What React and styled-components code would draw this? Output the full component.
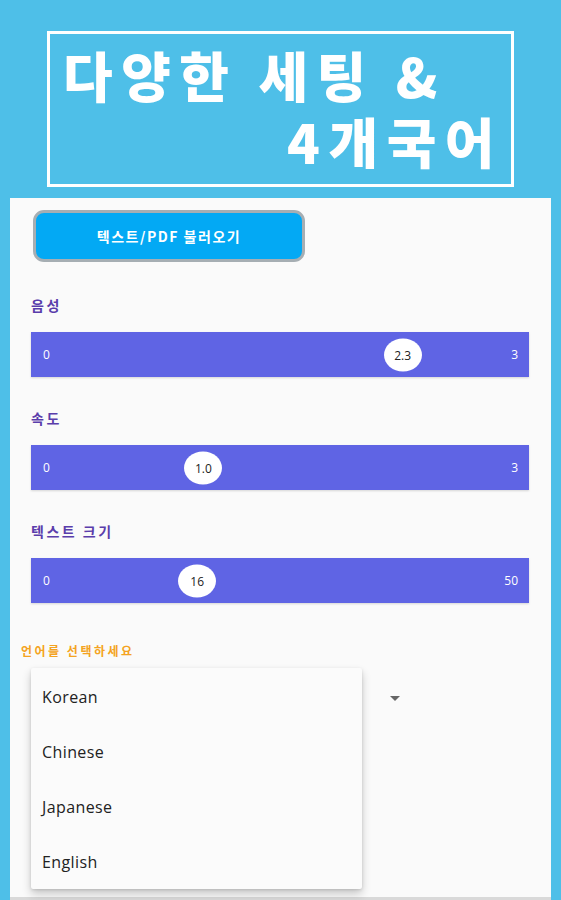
import styled, { createGlobalStyle } from 'styled-components'

const GlobalStyle = createGlobalStyle`
  html, body {
    margin: 0;
    padding: 0;
    background: #4ebfe8;
  }
  * { box-sizing: border-box; }
`

const sliders = [
  { label: '음성', min: 0, max: 3, value: 2.3, text: '2.3' },
  { label: '속도', min: 0, max: 3, value: 1.0, text: '1.0' },
  { label: '텍스트 크기', min: 0, max: 50, value: 16, text: '16' },
]

const languages = ['Korean', 'Chinese', 'Japanese', 'English']

const THUMB = 38

const App = () => {
  return <Page>
    <GlobalStyle />
    <TitleBox>
      {/* second line wraps on its own and is pushed right by text-align-last */}
      <TitleText>다양한 세팅 &amp; 4개국어</TitleText>
    </TitleBox>

    <Panel>
      <LoadButton>텍스트/PDF 불러오기</LoadButton>

      {sliders.map(s => {
        const pct = (s.value - s.min) / (s.max - s.min)
        return <SliderBlock key={s.label}>
          <SectionLabel>{s.label}</SectionLabel>
          <Track>
            <EndLabel>{s.min}</EndLabel>
            <Thumb style={{ left: `calc((100% - ${THUMB}px) * ${pct})` }}>
              {s.text}
            </Thumb>
            <EndLabel>{s.max}</EndLabel>
          </Track>
        </SliderBlock>
      })}

      <LangLabel>언어를 선택하세요</LangLabel>
      <SelectField>
        <Caret />
        <Menu>
          {languages.map(l => <MenuItem key={l}>{l}</MenuItem>)}
        </Menu>
      </SelectField>
    </Panel>
  </Page>
}

const Page = styled.main`
  width: 561px;
  height: 900px;
  overflow: hidden;
  padding-top: 31px;
  background: #4ebfe8;
  display: flex;
  flex-direction: column;
`

const TitleBox = styled.div`
  margin-left: 47px;
  width: 467px;
  height: 156px;
  border: 3px solid #fff;
  padding: 8px 8px 0 13px;
`

const TitleText = styled.div`
  color: #fff;
  font-family: "Noto Sans CJK KR", "Noto Sans", sans-serif;
  font-weight: 900;
  font-size: 54px;
  line-height: 66px;
  letter-spacing: 8.5px;
  text-align: left;
  text-align-last: right;
`

const Panel = styled.section`
  margin: 11px 10px 0;
  flex: 1;
  background: #fafafa;
  border-bottom: 3px solid #d9d9d9;
  padding: 12px 22px 0 21px;
  display: flex;
  flex-direction: column;
`

const LoadButton = styled.button`
  margin-left: 2px;
  width: 272px;
  height: 52px;
  background: #03a9f4;
  border: 3px solid #a6aeb3;
  border-radius: 11px;
  color: #fff;
  font-family: "Noto Sans CJK KR", "Noto Sans", sans-serif;
  font-weight: 700;
  font-size: 14px;
  letter-spacing: 1.5px;
  padding: 0;
  margin-bottom: 33px;
`

const SliderBlock = styled.div`
  display: flex;
  flex-direction: column;
  gap: 17px;
  margin-bottom: 31px;
`

const SectionLabel = styled.div`
  color: #5a3dab;
  font-family: "Noto Sans CJK KR", "Noto Sans", sans-serif;
  font-weight: 700;
  font-size: 14px;
  line-height: 20px;
  letter-spacing: 2.5px;
`

const Track = styled.div`
  position: relative;
  height: 45px;
  background: #5f64e4;
  box-shadow: 0 1px 2px rgba(0, 0, 0, 0.15);
  display: flex;
  align-items: center;
  justify-content: space-between;
  padding: 0 11px 0 12px;
`

const EndLabel = styled.span`
  color: #fff;
  font-family: "Open Sans", "Noto Sans", sans-serif;
  font-size: 12px;
`

const Thumb = styled.div`
  position: absolute;
  top: 50%;
  transform: translateY(-50%);
  width: ${THUMB}px;
  height: 33px;
  border-radius: 50%;
  background: #fff;
  color: #222;
  font-family: "Open Sans", "Noto Sans", sans-serif;
  font-size: 12px;
  display: flex;
  align-items: center;
  justify-content: center;
`

const LangLabel = styled.div`
  margin-left: -10px;
  margin-top: 9px;
  color: #f4a321;
  font-family: "Noto Sans CJK KR", "Noto Sans", sans-serif;
  font-weight: 700;
  font-size: 12px;
  line-height: 16px;
  letter-spacing: 2.5px;
`

const SelectField = styled.div`
  position: relative;
  width: 375px;
  height: 48px;
  margin-top: 12px;
  padding: 6px 6px 0 0;
  display: flex;
  align-items: center;
  justify-content: flex-end;
`

const Caret = styled.span`
  width: 0;
  height: 0;
  border-left: 5px solid transparent;
  border-right: 5px solid transparent;
  border-top: 5px solid #666;
`

const Menu = styled.ul`
  position: absolute;
  left: 0;
  top: -3px;
  width: 331px;
  margin: 0;
  padding: 2px 0 0;
  list-style: none;
  background: #fbfbfb;
  border-radius: 2px;
  box-shadow: 0 5px 10px rgba(0, 0, 0, 0.2), 0 1px 3px rgba(0, 0, 0, 0.12);
`

const MenuItem = styled.li`
  height: 54.75px;
  display: flex;
  align-items: center;
  padding-left: 11px;
  color: #222;
  font-family: "Open Sans", "Noto Sans", sans-serif;
  font-size: 16px;
  letter-spacing: 0.4px;
`

export default App
